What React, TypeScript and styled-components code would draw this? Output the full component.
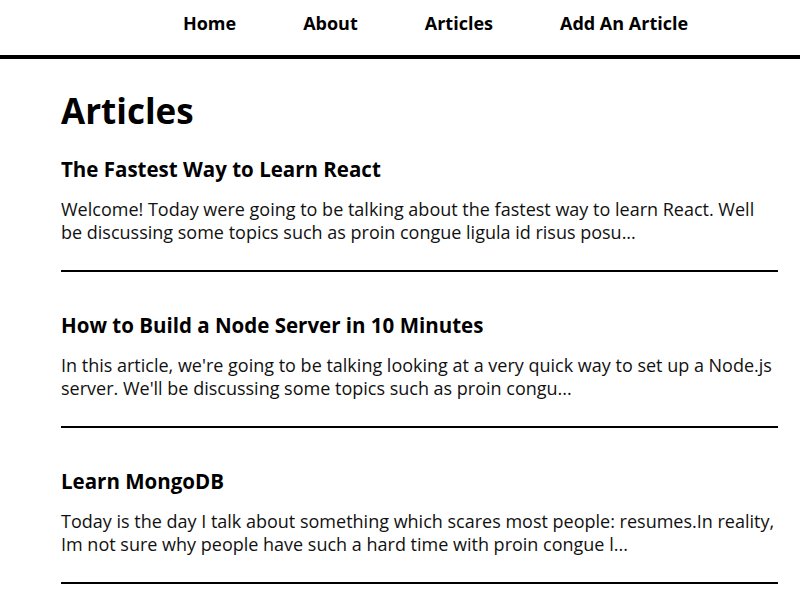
import React from "react";
import styled, { createGlobalStyle } from "styled-components";

const Global = createGlobalStyle`
  html, body { margin: 0; padding: 0; background: #fff; }
  body { font-family: "Open Sans", "Noto Sans", sans-serif; color: #000; }
  * { box-sizing: border-box; }
`;

const NavBar = styled.nav`
  height: 59px;
  border-bottom: 4px solid #000;
  display: flex;
  justify-content: center;
  align-items: flex-start;
  padding-left: 71px;
`;

const NavList = styled.ul`
  list-style: none;
  margin: 0;
  padding: 0;
  display: flex;
  gap: 67px;
`;

const NavLink = styled.a`
  display: block;
  font-size: 18px;
  font-weight: 700;
  line-height: 47px;
  color: #000;
  text-decoration: none;
`;

const Main = styled.main`
  padding: 29px 22px 0 61px;
`;

const Title = styled.h1`
  margin: 0 0 22px;
  font-size: 35px;
  font-weight: 700;
  line-height: 46px;
`;

const Article = styled.article`
  border-bottom: 2px solid #000;
  padding-bottom: 26px;
  margin-bottom: 40px;
`;

const ArticleTitle = styled.h3`
  margin: 0 0 16px;
  font-size: 20.5px;
  font-weight: 700;
  line-height: 26px;
`;

const Excerpt = styled.p`
  margin: 0;
  font-size: 18px;
  line-height: 23px;
  color: #111;
`;

const articles = [
  {
    title: "The Fastest Way to Learn React",
    text: "Welcome! Today were going to be talking about the fastest way to learn React. Well be discussing some topics such as proin congue ligula id risus posu...",
  },
  {
    title: "How to Build a Node Server in 10 Minutes",
    text: "In this article, we're going to be talking looking at a very quick way to set up a Node.js server. We'll be discussing some topics such as proin congu...",
  },
  {
    title: "Learn MongoDB",
    text: "Today is the day I talk about something which scares most people: resumes.In reality, Im not sure why people have such a hard time with proin congue l...",
  },
];

export default function App() {
  return (
    <>
      <Global />
      <NavBar>
        <NavList>
          {["Home", "About", "Articles", "Add An Article"].map((l) => (
            <li key={l}>
              <NavLink href="#">{l}</NavLink>
            </li>
          ))}
        </NavList>
      </NavBar>
      <Main>
        <Title>Articles</Title>
        {articles.map((a) => (
          <Article key={a.title}>
            <ArticleTitle>{a.title}</ArticleTitle>
            <Excerpt>{a.text}</Excerpt>
          </Article>
        ))}
      </Main>
    </>
  );
}
